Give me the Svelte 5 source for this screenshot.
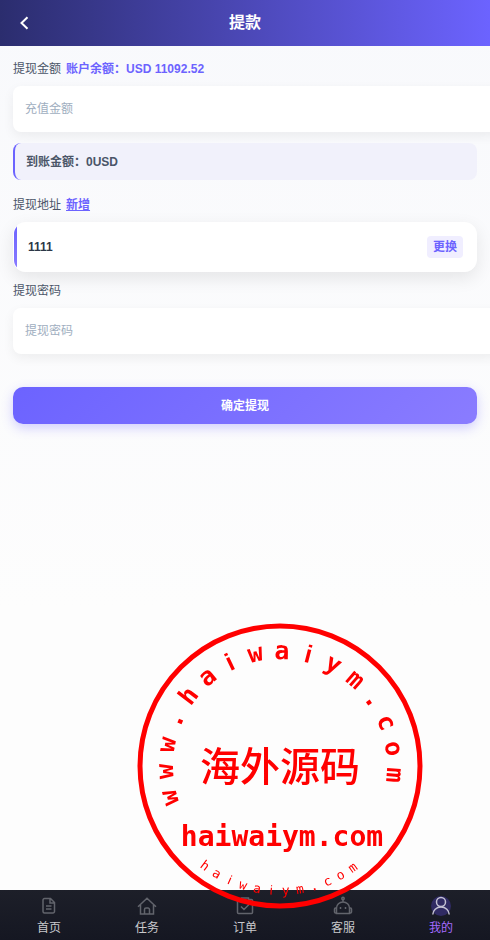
<script lang="ts">
    type Tab = { icon : string, label : string };

    let amount = $state('');
    let password = $state('');
    let account = $state('1111');
    let balance = $state('11092.52');

    const tabs : Tab[] = [
        { icon: 'doc', label: '首页' },
        { icon: 'home', label: '任务' },
        { icon: 'order', label: '订单' },
        { icon: 'robot', label: '客服' },
        { icon: 'user', label: '我的' },
    ];
    let active = $state('user');

    // letters on the stamp, angle in degrees from the top / bottom of the ring
    const upper = [...'www.haiwaiym.com'].map((char, i) => ({ char, angle: -106 + i * 13.37 }));
    const lower = [...'haiwaiym.com'].map((char, i) => ({ char, angle: 37 - i * 6.6 }));
</script>

<div class="page">
    <header>
        <button class="back" aria-label="返回">
            <svg width="10" height="14" viewBox="0 0 10 14"><path d="M8.500 1.200 2.500 7l6 5.800" fill="none" stroke="#fff" stroke-width="2"/></svg>
        </button>
        <h1>提款</h1>
    </header>

    <main>
        <div class="row">
            <label for="amount">提现金额</label>
            <b>账户余额：USD {balance}</b>
        </div>
        <input id="amount" type="text" placeholder="充值金额" bind:value={amount}>
        <p class="arrival">到账金额：{amount || 0}USD</p>

        <div class="row address">
            <span>提现地址</span>
            <a href="#add">新增</a>
        </div>
        <div class="card">
            <span class="strip"></span>
            <b>{account}</b>
            <button>更换</button>
        </div>

        <div class="row">
            <label for="password">提现密码</label>
        </div>
        <input id="password" type="password" placeholder="提现密码" bind:value={password}>

        <button class="submit">确定提现</button>
    </main>

    <nav>
        {#each tabs as tab}
            <a href="#{tab.icon}" class:active={active == tab.icon} onclick={() => active = tab.icon}>
                <svg width="20" height="20" viewBox="0 0 20 20">
                    {#if tab.icon == 'doc'}
                        <path d="M5.500 2.500h6l4 4v9a1.500 1.500 0 0 1-1.500 1.500H5.500a1.500 1.500 0 0 1-1.500-1.500V4a1.500 1.500 0 0 1 1.500-1.500zM11 2.500v4.500h4.500M7 10h5.500M7 13h5.500"/>
                    {:else if tab.icon == 'home'}
                        <path d="M1 10.800 10 2.200l9 8.600M3.500 9v9h13V9M7.500 18v-4.500a1.500 1.500 0 0 1 1.500-1.500h2a1.500 1.500 0 0 1 1.500 1.500v4.500"/>
                    {:else if tab.icon == 'order'}
                        <path d="M6 3.500H3.500a1 1 0 0 0-1 1v12a1 1 0 0 0 1 1h13a1 1 0 0 0 1-1v-12a1 1 0 0 0-1-1H14M6.500 2h7v3h-7zM6 10.500l3 3 5.500-5.500"/>
                    {:else if tab.icon == 'robot'}
                        <circle cx="10" cy="2.500" r="1.200"/>
                        <path d="M10 3.500V6M3.500 17.500V12a6.500 6 0 0 1 13 0v5.500zM3.500 12H2.500A1 1 0 0 0 1.500 13v3a1 1 0 0 0 1 1h1M16.500 12h1a1 1 0 0 1 1 1v3a1 1 0 0 1-1 1h-1M7.500 11v2M12.500 11v2"/>
                    {:else}
                        <circle class="halo" cx="10" cy="10" r="10"/>
                        <circle cx="10" cy="6" r="4.500"/>
                        <path d="M1.800 18.500a8.200 7.500 0 0 1 16.400 0"/>
                    {/if}
                </svg>
                <span>{tab.label}</span>
            </a>
        {/each}
    </nav>

    <svg class="stamp" width="286" height="286" viewBox="-143 -143 286 286">
        <circle r="140" fill="none" stroke="#f00" stroke-width="5"/>
        {#each upper as letter}
            <text class="upper" class:plain={letter.char == 'i'} transform="rotate({letter.angle})" y="-107">{letter.char}</text>
        {/each}
        <text class="name" y="15">海外源码</text>
        <text class="site" x="2" y="80">haiwaiym.com</text>
        {#each lower as letter}
            <text class="lower" class:plain={letter.char == 'i'} transform="rotate({letter.angle})" y="129">{letter.char}</text>
        {/each}
    </svg>
</div>

<style>
    :global(body)
    {
        margin: 0;
    }

    .page
    {
        min-height: 100vh;
        overflow-x: hidden;
        background: linear-gradient(180deg, #f8f9fc, #fdfdfd 65%);
        font-family: "Liberation Sans", "Noto Sans CJK SC", sans-serif;
        font-size: 12px;
        line-height: 18px;
        color: #4a5568;
    }

    button, input
    {
        font: inherit;
        border: none;
    }

    button
    {
        cursor: pointer;
    }

    header
    {
        display: grid;
        grid-template-columns: 48px 1fr 48px;
        align-items: center;
        height: 46px;
        color: #fff;
        background: linear-gradient(90deg, #2b2d6e, #6c63ff);
    }

    h1
    {
        margin: 0;
        font-size: 16px;
        line-height: 24px;
        text-align: center;
    }

    .back
    {
        display: flex;
        justify-content: center;
        padding: 8px;
        background: none;
    }

    main
    {
        padding: 14px 13px 60px;
    }

    .row
    {
        display: flex;
        gap: 5px;
        margin-bottom: 8px;
    }

    .row b, .row a
    {
        color: #6c63ff;
        font-weight: bold;
    }

    input
    {
        display: block;
        width: 100%;
        height: 18px;
        padding: 14px 12px;
        border-radius: 8px;
        background: #fff;
        color: #4a5568;
        box-shadow: 0 4px 12px rgba(0, 0, 0, .06);
        outline: none;
    }

    input::placeholder
    {
        color: #a0aec0;
        opacity: 1;
    }

    .arrival
    {
        margin: 11px 0 16px;
        padding: 10px 11px 9px;
        border-left: 2px solid #6c63ff;
        border-radius: 8px;
        background: #f1f1fb;
        font-weight: bold;
    }

    .card
    {
        display: flex;
        align-items: center;
        height: 48px;
        margin-bottom: 10px;
        padding-right: 13px;
        border: 1px solid #fff;
        border-radius: 12px;
        overflow: hidden;
        background: #fff;
        box-shadow: 0 6px 18px rgba(0, 0, 0, .09);
    }

    .strip
    {
        align-self: stretch;
        width: 3px;
        background: linear-gradient(180deg, #6c63ff, #8a7cff);
    }

    .card b
    {
        flex: 1;
        margin-left: 11px;
        color: #2d3748;
    }

    .card button
    {
        padding: 2px 6px;
        border-radius: 4px;
        background: #f0eeff;
        color: #6c63ff;
        font-weight: bold;
    }

    .submit
    {
        display: block;
        width: 100%;
        margin-top: 33px;
        padding: 10px 0 9px;
        border-radius: 10px;
        background: linear-gradient(135deg, #6c63ff, #8a7cff);
        color: #fff;
        font-weight: bold;
        box-shadow: 0 4px 12px rgba(108, 99, 255, .3);
    }

    nav
    {
        position: fixed;
        left: 0;
        right: 0;
        bottom: 0;
        display: flex;
        height: 50px;
        background: linear-gradient(180deg, #1d1f29, #151722);
    }

    nav a
    {
        flex: 1;
        display: flex;
        flex-direction: column;
        align-items: center;
        gap: 3px;
        padding-top: 6px;
        color: #c8c9cc;
        text-decoration: none;
    }

    nav svg
    {
        fill: none;
        stroke: #62646c;
        stroke-width: 1.5;
    }

    nav .active
    {
        color: #a66bff;
    }

    .active svg
    {
        stroke: #c3c1d4;
    }

    .halo
    {
        fill: #302b63;
        stroke: none;
    }

    .stamp
    {
        position: fixed;
        right: 67px;
        bottom: 31px;
        pointer-events: none;
        fill: #f00;
        text-anchor: middle;
        font-family: "DejaVu Sans Mono", monospace;
    }

    .upper
    {
        font-size: 25px;
        font-weight: bold;
    }

    .site
    {
        font-size: 28px;
        font-weight: bold;
    }

    .lower
    {
        font-size: 13px;
    }

    .plain
    {
        font-family: "Liberation Sans", sans-serif;
    }

    .name
    {
        font-family: "Noto Sans CJK SC", sans-serif;
        font-size: 40px;
        font-weight: 500;
    }
</style>
